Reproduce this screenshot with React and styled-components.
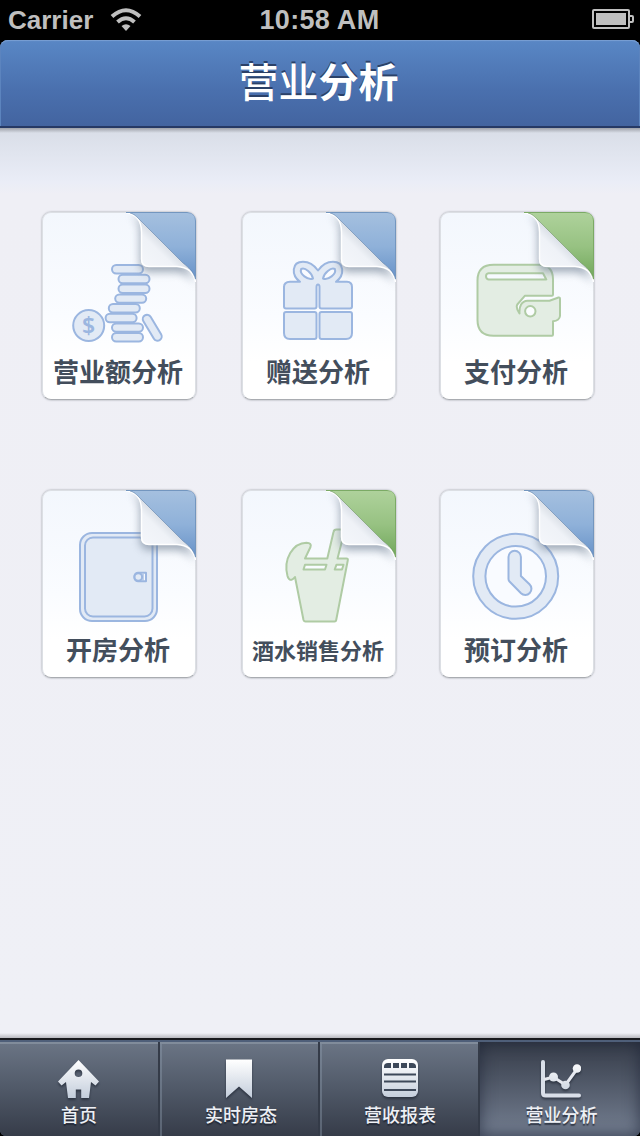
import styled, { createGlobalStyle } from 'styled-components';

const GlobalStyle = createGlobalStyle`
  * {
    box-sizing: border-box;
  }
  body {
    margin: 0;
    background: #000000;
    font-family: 'Liberation Sans', 'Noto Sans CJK SC', sans-serif;
  }
`;

const Screen = styled.div`
  display: flex;
  flex-direction: column;
  width: 640px;
  height: 1136px;
  overflow: hidden;
  background: #000000;
`;

/**
 * STATUS BAR
 */

const StatusBar = styled.div`
  display: grid;
  grid-template-columns: 1fr auto 1fr;
  align-items: center;
  height: 40px;
  padding: 0 6px 0 8px;
  color: #bfbfbf;
  font-size: 26px;
  font-weight: 700;
  line-height: 40px;
`;

const Carrier = styled.div`
  display: flex;
  align-items: center;
  gap: 17px;
`;

const Clock = styled.span`
  margin-right: 3px;
  font-size: 27px;
  letter-spacing: 0.3px;
`;

const Battery = styled.svg`
  justify-self: end;
  margin-top: -2px;
`;

/**
 * NAVIGATION BAR
 */

const NavBar = styled.header`
  display: flex;
  justify-content: center;
  height: 88px;
  flex: none;
  padding-right: 3px;
  border-bottom: 2px solid #263965;
  border-radius: 8px 8px 0 0;
  background: linear-gradient(#5987c5, #4a70ae 58%, #4364a0);
  box-shadow: inset 0 2px 1px -1px #7ba0d3, inset 1px 0 0 #5c84be, inset -1px 0 0 #5c84be;
`;

const Title = styled.h1`
  margin: 0;
  color: #ffffff;
  font-family: 'Noto Sans CJK SC', sans-serif;
  font-size: 40px;
  font-weight: 500;
  line-height: 80px;
  text-shadow: 0 -2px 0 #2b4168;
  b {
    font-weight: 700;
  }
`;

/**
 * CARDS
 */

const Content = styled.main`
  flex: 1;
  padding: 84px 46px 0 42px;
  background:
    linear-gradient(rgba(120, 122, 128, 0.6), rgba(120, 122, 128, 0)) top / 100% 5px no-repeat,
    linear-gradient(rgba(130, 130, 136, 0), rgba(130, 130, 136, 0.5)) bottom / 100% 5px no-repeat,
    linear-gradient(#d8dde7, #eaedf7 54px, #efeff5 66px, #eff0f6);
`;

const CardGrid = styled.div`
  display: grid;
  grid-template-columns: 200px 198px 154px;
  row-gap: 90px;
`;

const Card = styled.div`
  position: relative;
  width: 154px;
  height: 188px;
  border: 1px solid #dcdfe4;
  border-bottom-color: #a9acb1;
  border-radius: 9px;
  background: linear-gradient(#f3f7fd, #fafcff 55%, #ffffff 80%);
  box-shadow: 0 0 2px rgba(60, 65, 75, 0.55);
  text-align: center;
`;

const CardIcon = styled.svg`
  display: block;
  margin: -1px;
  fill: ${(props) => (props.$green ? '#e3ede3' : '#e2eaf5')};
  stroke: ${(props) => (props.$green ? '#afcba4' : '#9bb6e0')};
  stroke-width: 2;
  stroke-linejoin: round;
`;

const Fold = styled.svg`
  position: absolute;
  top: -1px;
  right: -1px;
  overflow: visible;
`;

const CardLabel = styled.div`
  margin: -1px 1px 0 -1px;
  color: #434e5c;
  font-family: 'Noto Sans CJK SC', sans-serif;
  font-size: ${(props) => (props.$small ? 22 : 26)}px;
  font-weight: 700;
  line-height: 40px;
  white-space: nowrap;
`;

/**
 * TAB BAR
 */

const TabBar = styled.nav`
  display: grid;
  grid-template-columns: repeat(4, 160px);
  flex: none;
  height: 98px;
  border-top: 2px solid #191a1e;
  border-radius: 0 0 6px 6px;
  background: #4f5f79;
  padding-top: 2px;
  overflow: hidden;
`;

const Tab = styled.div`
  display: flex;
  flex-direction: column;
  align-items: center;
  padding-top: 12px;
  border-right: ${(props) => (props.$active ? 0 : '2px solid #343b48')};
  background: ${(props) =>
    props.$active
      ? 'linear-gradient(#363c49, #4b5362 35%, #6e788a 90%)'
      : 'linear-gradient(#6b7585, #505968 50%, #363c49)'};
  box-shadow: ${(props) =>
    props.$active
      ? 'inset 0 0 16px rgba(25, 33, 50, 0.65)'
      : 'inset 0 2px 0 #818c9b, inset 2px 0 0 rgba(143, 157, 174, 0.4)'};
  &:first-child {
    box-shadow: inset 0 2px 0 #818c9b;
  }
`;

const TabIcon = styled.svg`
  filter: drop-shadow(0 2px 1px rgba(25, 32, 45, 0.6));
`;

const TabLabel = styled.span`
  margin-top: -1px;
  padding-left: ${(props) => props.$shift || 0}px;
  color: #eef0f5;
  font-family: 'Noto Sans CJK SC', sans-serif;
  font-size: 18px;
  font-weight: 500;
  line-height: 26px;
  text-shadow: 0 2px 1px rgba(25, 32, 45, 0.7);
`;

const COINS = [
  [70, 53],
  [76.5, 62.8],
  [76.5, 72.6],
  [73.2, 82.4],
  [66.8, 92],
  [63.6, 101.8],
  [70, 111.4],
  [70, 121],
];

function CoinsArt() {
  return (
    <>
      {COINS.map(([x, y]) => (
        <rect key={y} x={x} y={y} width="31" height="8.4" rx="4.2" />
      ))}
      <rect x="-4.2" y="-4.2" width="28.8" height="8.4" rx="4.2" transform="translate(105 107) rotate(59)" />
      <circle cx="46.7" cy="113.6" r="15.5" />
      <text
        x="46.7"
        y="122"
        textAnchor="middle"
        fontFamily="Noto Sans"
        fontSize="23"
        fontWeight="600"
        fill="#9bb6e0"
        stroke="none"
      >
        $
      </text>
    </>
  );
}

function GiftArt() {
  return (
    <>
      <path d="M58 69.8C49 63 49.5 49.8 61 49.8C67 49.8 72 53 76 58.5C80 53 85 49.8 91 49.8C102.500 49.8 103 63 94 69.8H105Q110 70 110 75V94.500Q110 96.500 108 96.500H79.500Q77.500 96.500 77.500 94.500V75Q77.500 72.500 76 72.500Q74.500 72.500 74.500 75V94.500Q74.500 96.500 72.500 96.500H44Q42 96.500 42 94.500V75Q42 70 48 69.800Z" />
      <path d="M44 100H72.500Q74.500 100 74.500 102V125Q74.500 127 72.500 127H48Q42 127 42 121V102Q42 100 44 100Z" />
      <path d="M79.500 100H108Q110 100 110 102V121Q110 127 104 127H79.500Q77.500 127 77.500 125V102Q77.500 100 79.500 100Z" />
      <path d="M59.200 57C63 55 70 61 71 66.500C66 68.500 57 62 59.200 57Z" fill="#f9fbff" />
      <path d="M92.800 57C89 55 82 61 81 66.500C86 68.500 95 62 92.800 57Z" fill="#f9fbff" />
    </>
  );
}

function WalletArt() {
  return (
    <>
      <path d="M53.500 52.700H98Q113 52.700 113 67V82.500Q113 83.700 112 83.700H85L77.300 92.500Q75.500 96 79.500 101.500C79 94 81.500 89 87.500 88.700H109.500L118.500 85.500Q120 85 120 87V104Q119.500 108.500 113 109.300V122.500Q113 123.700 112 123.700H53.500Q37.500 123.700 37.500 108V68.500Q37.500 52.700 53.500 52.700Z" />
      <path d="M48.500 61.300H103L106.300 67.400H48.500Q46 67 46 64.300Q46 61.600 48.500 61.300Z" fill="#f7faff" />
      <circle cx="90.300" cy="99.300" r="5.200" fill="#fbfdff" />
    </>
  );
}

function DoorArt() {
  return (
    <>
      <rect x="38" y="43" width="77" height="88" rx="12" />
      <rect x="43" y="47.500" width="67.500" height="79" rx="8" />
      <path d="M96 82.800H104V91.300H96A4.300 4.300 0 0 1 96 82.800Z" fill="#f5f8fd" />
      <circle cx="96.300" cy="87" r="3.800" />
      <path d="M101 84V90.500" strokeWidth="1.200" />
    </>
  );
}

function DrinkArt() {
  return (
    <>
      <path d="M63 68.500H85.300L91.500 42Q92 39.500 94.500 39.500H103L95.500 68.500H104.500Q106.200 68.500 105.800 70.200L94.200 130Q94 131.500 92.500 131.500H63.500Q62 131.500 61.500 130L53 87C50 91 47 91 45.500 86C41 69 51 53 64.500 52.800Q70 53 68.500 57Z" />
      <path d="M63 74.700H84.500L83 79.500H61.500Z" fill="#f9fcff" />
      <path d="M94.500 74.700H101.500L100 79.500H92.700Z" fill="#f9fcff" />
    </>
  );
}

function ClockArt() {
  return (
    <>
      <circle cx="75.700" cy="86.300" r="42.500" />
      <circle cx="75.700" cy="86.300" r="30.300" fill="#f9fbff" />
      <path d="M68.500 67A6.200 6.200 0 0 1 80.900 67V86L89.500 94.300A6 6 0 0 1 81 103.300L69.500 91.500Q68.500 90.500 68.500 89Z" />
    </>
  );
}

function PageFold({ id, green }) {
  return (
    <Fold width="154" height="90" viewBox="0 0 154 90">
      <defs>
        <linearGradient id={`${id}-back`} x1="0" y1="0" x2="0" y2="1">
          <stop offset="0" stopColor={green ? '#afd29c' : '#a5c0df'} />
          <stop offset="0.5" stopColor={green ? '#97c282' : '#8fb1d9'} />
          <stop offset="1" stopColor={green ? '#6ea558' : '#6590c7'} />
        </linearGradient>
        <linearGradient id={`${id}-flap`} x1="0.2" y1="0.8" x2="0.55" y2="0.45">
          <stop offset="0" stopColor="#f5f7fb" />
          <stop offset="0.75" stopColor="#eff2f7" />
          <stop offset="1" stopColor="#dce1e8" />
        </linearGradient>
        <filter id={`${id}-blur`} x="-30%" y="-30%" width="160%" height="170%">
          <feGaussianBlur stdDeviation="4.5" />
        </filter>
        <clipPath id={`${id}-clip`}>
          <rect width="154" height="100" rx="9" />
        </clipPath>
      </defs>
      <g clipPath={`url(#${id}-clip)`}>
        <path
          d="M86 3C94 5 98 10 98 20V51Q99 60 107 60H132C144 60 150 66 154 76L145 53L97 6Z"
          fill="#6f7f92"
          opacity="0.65"
          filter={`url(#${id}-blur)`}
        />
        <path
          d="M82 0H154V69C151 59 147 56 141 51L97 7C92 2 88 0 82 0Z"
          fill={`url(#${id}-back)`}
        />
        <path
          d="M82 0.500C93 1 99 8 99 20V47Q99 54.500 107 54.500H135C146 55 152 61 154 70C151 59 147 56 141 51L97 7C92 2 88 0 82 0.500Z"
          fill={`url(#${id}-flap)`}
        />
        <path
          d="M84 1C94 2 99.500 9 99.500 20V47Q99.500 54.500 107 54.500H135C146 55 152 61 153.500 70"
          fill="none"
          stroke="#ffffff"
          strokeWidth="1.500"
        />
        <path
          d="M88 1C92 2 94 4 97 7L141 51C147 56 151 59 153.500 67"
          fill="none"
          stroke={green ? '#659052' : '#537ba8'}
          strokeWidth="0.800"
          opacity="0.700"
        />
        <path
          d="M84 0.500H145Q153.500 0.500 153.500 9V67"
          fill="none"
          stroke={green ? '#7baa65' : '#7396bf'}
        />
      </g>
    </Fold>
  );
}

function HomeIcon() {
  return (
    <path d="M20.500 0L41 21.500L37.500 25.500L33 22L31 38H23.200V29.500H17.800V38H10L8 22L3.500 25.500L0 21.500Z M20.500 9.500A3.800 3.800 0 1 0 20.500 17.100A3.800 3.800 0 1 0 20.500 9.500Z" />
  );
}

function BookmarkIcon() {
  return <path d="M8 -0.500H34V38L21 26.500L8 38Z" />;
}

function ReportIcon() {
  return (
    <>
      <rect x="4" y="-1" width="36" height="38" rx="6" />
      <path
        d="M6 8V6.500Q6 3 10 3H13V8ZM15 3H21V8H15ZM23 3H29V8H23ZM31 3H34Q38 3 38 6.500V8H31ZM6 13.500H38V15.500H6ZM6 20.500H38V22.500H6ZM6 29H38V31H6Z"
        fill="#3d4859"
      />
    </>
  );
}

function ChartIcon() {
  return (
    <>
      <path
        d="M4 2V33Q4 35.500 6.500 35.500H40"
        fill="none"
        stroke="#d9dfe9"
        strokeWidth="4"
        strokeLinecap="round"
      />
      <path d="M5 19.500L14.500 17L26.500 25L38 9" fill="none" stroke="#e6e9f0" strokeWidth="3" />
      <circle cx="14.500" cy="17" r="4.500" />
      <circle cx="26.500" cy="25" r="4.300" />
      <circle cx="38" cy="8.500" r="4.300" />
    </>
  );
}

const CARDS = [
  { id: 'revenue', label: '营业额分析', Art: CoinsArt },
  { id: 'gift', label: '赠送分析', Art: GiftArt },
  { id: 'payment', label: '支付分析', Art: WalletArt, green: true },
  { id: 'room', label: '开房分析', Art: DoorArt },
  { id: 'drinks', label: '酒水销售分析', Art: DrinkArt, green: true, small: true },
  { id: 'booking', label: '预订分析', Art: ClockArt },
];

const TABS = [
  { label: '首页', Icon: HomeIcon },
  { label: '实时房态', Icon: BookmarkIcon, shift: 4 },
  { label: '营收报表', Icon: ReportIcon, shift: 2 },
  { label: '营业分析', Icon: ChartIcon, shift: 3, active: true },
];

export default function App() {
  return (
    <Screen>
      <GlobalStyle />
      <StatusBar>
        <Carrier>
          Carrier
          <svg width="32" height="24" viewBox="0 0 32 24" fill="none" stroke="#bfbfbf" strokeWidth="4">
            <path d="M2 8.500Q16 -4 30 8.500" />
            <path d="M7.500 14Q16 6.500 24.500 14" />
            <path d="M11.500 18Q16 14.500 20.500 18L16 23Z" fill="#bfbfbf" stroke="none" />
          </svg>
        </Carrier>
        <Clock>10:58 AM</Clock>
        <Battery width="42" height="20" viewBox="0 0 42 20" fill="none" stroke="#bfbfbf" strokeWidth="2">
          <rect x="1" y="1" width="36" height="18" rx="1" />
          <path d="M38 7H40Q41 7 41 8V12Q41 13 40 13H38" />
          <rect x="4" y="4" width="30" height="12" fill="#bfbfbf" stroke="none" />
        </Battery>
      </StatusBar>
      <NavBar>
        <Title>
          营业<b>分析</b>
        </Title>
      </NavBar>
      <Content>
        <CardGrid>
          {CARDS.map(({ id, label, Art, green, small }) => (
            <Card key={id}>
              <CardIcon width="154" height="140" viewBox="0 0 154 140" $green={green}>
                <Art />
              </CardIcon>
              <CardLabel $small={small}>{label}</CardLabel>
              <PageFold id={id} green={green} />
            </Card>
          ))}
        </CardGrid>
      </Content>
      <TabBar>
        {TABS.map(({ label, Icon, shift, active }) => (
          <Tab key={label} $active={active}>
            <TabIcon width="42" height="48" viewBox="0 -6 42 48" fill="url(#tab-fill)" fillRule="evenodd">
              <defs>
                <linearGradient id="tab-fill" gradientUnits="userSpaceOnUse" x1="0" y1="0" x2="0" y2="38">
                  <stop offset="0" stopColor="#ffffff" />
                  <stop offset="1" stopColor="#c3cddb" />
                </linearGradient>
              </defs>
              <Icon />
            </TabIcon>
            <TabLabel $shift={shift}>{label}</TabLabel>
          </Tab>
        ))}
      </TabBar>
    </Screen>
  );
}
